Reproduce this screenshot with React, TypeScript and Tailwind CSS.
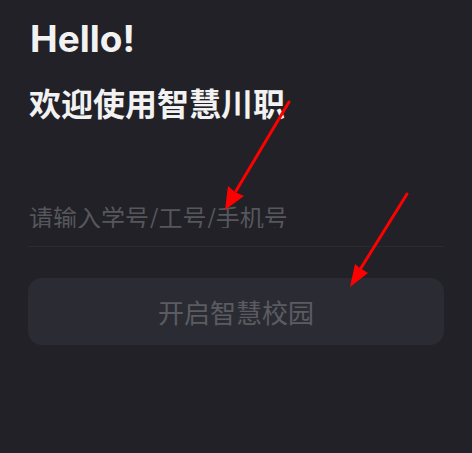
import React from "react";

export default function App() {
  return (
    <div className="relative min-h-[453px] w-full overflow-hidden bg-[#212127] px-[28px] pt-[16px] font-['Inter','Noto_Sans_CJK_SC',sans-serif]">
      <h1 className="pl-[2px] text-[37px] font-bold leading-[45px] text-[#f2f2f3]">Hello!</h1>
      <h2 className="mt-[25px] pl-[1px] font-['Noto_Sans_CJK_SC',sans-serif] text-[32px] font-bold leading-[32px] text-[#f2f2f3]">
        欢迎使用智慧川职
      </h2>
      <div className="mt-[86px] border-b border-[#2a2b31] pb-[18px]">
        <input
          className="block h-[24px] w-full bg-transparent pl-[1px] font-['Noto_Sans_CJK_SC',sans-serif] text-[24px] leading-[24px] text-[#e5e5e5] outline-none placeholder:text-[#56575d]"
          placeholder="请输入学号/工号/手机号"
        />
      </div>
      <button className="mt-[31px] flex h-[67px] w-full items-center justify-center rounded-[14px] bg-[#2b2c33] font-['Noto_Sans_CJK_SC',sans-serif] text-[26px] leading-[26px] text-[#5b5c62]">
        开启智慧校园
      </button>
      <svg className="pointer-events-none absolute left-0 top-0" width="472" height="453" viewBox="0 0 472 453">
        <line x1="289" y1="102" x2="236" y2="191" stroke="#ff0000" strokeWidth="3" strokeLinecap="round" />
        <polygon points="225,210 244,196 235,192 228,186" fill="#ff0000" />
        <line x1="407" y1="194" x2="361" y2="268" stroke="#ff0000" strokeWidth="3" strokeLinecap="round" />
        <polygon points="350,287 368,273 360,268 355,264" fill="#ff0000" />
      </svg>
    </div>
  );
}
